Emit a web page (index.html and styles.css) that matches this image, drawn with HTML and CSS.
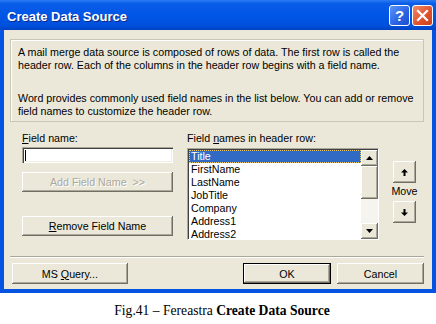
FILE: index.html
```html
<!DOCTYPE html>
<html lang="en">

<head>
    <meta charset="UTF-8">
    <title>Create Data Source</title>
    <link rel="stylesheet" href="styles.css">
</head>

<body>
    <div class="window">
        <div class="titlebar">
            <span class="title">Create Data Source</span>
            <div class="title-buttons">
                <span class="tb-btn help">?</span>
                <span class="tb-btn close">
                    <svg width="13" height="13" viewBox="0 0 13 13">
                        <path d="M2 2 L11 11 M11 2 L2 11" stroke="#fff" stroke-width="2.2" stroke-linecap="square" />
                    </svg>
                </span>
            </div>
        </div>

        <div class="content">
            <div class="info">
                <p>A mail merge data source is composed of rows of data. The first row is called the<br>header row. Each of the columns in the header row begins with a field name.</p>
                <p>Word provides commonly used field names in the list below. You can add or remove<br>field names to customize the header row.</p>
            </div>

            <div class="fields">
                <div class="left-col">
                    <label class="lbl"><u>F</u>ield name:</label>
                    <div class="textbox"><span class="caret"></span></div>
                    <button class="btn add" disabled><span>Add Field Name &nbsp;&gt;&gt;</span></button>
                    <button class="btn remove"><span><u>R</u>emove Field Name</span></button>
                </div>

                <div class="list-col">
                    <label class="lbl">Field <u>n</u>ames in header row:</label>
                    <div class="list-row">
                        <div class="listbox">
                            <ul class="items">
                                <li class="selected">Title</li>
                                <li>FirstName</li>
                                <li>LastName</li>
                                <li>JobTitle</li>
                                <li>Company</li>
                                <li>Address1</li>
                                <li>Address2</li>
                            </ul>
                            <div class="scrollbar">
                                <div class="sb-btn">
                                    <svg width="7" height="4" viewBox="0 0 7 4"><path d="M3.5 0 L7 4 H0 Z" fill="#000" /></svg>
                                </div>
                                <div class="sb-thumb"></div>
                                <div class="sb-track"></div>
                                <div class="sb-btn">
                                    <svg width="7" height="4" viewBox="0 0 7 4"><path d="M0 0 H7 L3.5 4 Z" fill="#000" /></svg>
                                </div>
                            </div>
                        </div>

                        <div class="move">
                            <button class="btn move-btn">
                                <svg width="7" height="7" viewBox="0 0 7 7"><path d="M3.5 0 L7 3.5 H4.5 V7 H2.5 V3.5 H0 Z" fill="#000" /></svg>
                            </button>
                            <span class="move-lbl">Move</span>
                            <button class="btn move-btn">
                                <svg width="7" height="7" viewBox="0 0 7 7"><path d="M2.5 0 H4.5 V3.5 H7 L3.5 7 L0 3.5 H2.5 Z" fill="#000" /></svg>
                            </button>
                        </div>
                    </div>
                </div>
            </div>

            <div class="separator"></div>

            <div class="footer">
                <button class="btn query"><span>MS <u>Q</u>uery...</span></button>
                <button class="btn ok"><span>OK</span></button>
                <button class="btn cancel"><span>Cancel</span></button>
            </div>
        </div>
    </div>

    <p class="caption">Fig.41 &ndash; Fereastra <b>Create Data Source</b></p>
</body>

</html>
```

FILE: styles.css
```css
body {
    margin: 0;
    background: #fff;
    font-family: "Liberation Sans", Arial, sans-serif;
    font-size: 10.7px;
}

.window {
    width: 436px;
    background: #0553e2;
    padding-bottom: 4px;
}

.titlebar {
    height: 30px;
    display: flex;
    align-items: center;
    justify-content: space-between;
    background: linear-gradient(#2d7cf4 0, #0a5de8 12%, #0056e6 50%, #0050de 85%, #0043c0 100%);
}

.title {
    margin-left: 7px;
    margin-top: 2px;
    color: #fff;
    font-weight: bold;
    font-size: 13px;
    text-shadow: 1px 1px #0a2a8a;
}

.title-buttons {
    display: flex;
    gap: 2px;
    margin-right: 3px;
    margin-top: 1px;
}

.tb-btn {
    width: 19px;
    height: 19px;
    border: 1px solid #fff;
    border-radius: 3px;
    display: flex;
    align-items: center;
    justify-content: center;
    color: #fff;
}

.help {
    background: linear-gradient(135deg, #5a94f8, #2a62e4 60%, #1c4fd0);
    font-weight: bold;
    font-size: 15px;
}

.close {
    background: linear-gradient(135deg, #f08a6a, #e0502c 60%, #c8401e);
}

.content {
    margin: 0 4px;
    height: 259px;
    background: #ebe8da;
    padding: 9px 8px 0 6px;
    box-sizing: border-box;
}

.info {
    height: 83px;
    box-sizing: border-box;
    border: 1px solid #c9c6b6;
    box-shadow: inset 1px 1px #fff;
    padding: 6px 0 0 7px;
    color: #000;
    white-space: nowrap;
}

.info p {
    margin: 0 0 20px;
    line-height: 13px;
}

.fields {
    display: flex;
    margin-top: 10px;
}

.lbl {
    display: block;
    line-height: 13px;
}

.left-col {
    width: 151px;
    margin-left: 12px;
}

.textbox {
    height: 16px;
    margin-top: 2px;
    background: #fff;
    box-sizing: border-box;
    box-shadow: inset 1px 1px #aca899, inset 2px 2px #404040, inset -1px -1px #fff, inset -2px -2px #f1efe2;
    padding: 3px 0 0 3px;
}

.caret {
    display: block;
    width: 1px;
    height: 11px;
    background: #000;
}

.btn {
    display: flex;
    align-items: center;
    justify-content: center;
    font-family: inherit;
    font-size: 10.7px;
    color: #000;
    background: #ebe8da;
    border: none;
    padding: 0;
    white-space: pre;
    box-shadow: inset -1px -1px #716f64, inset 1px 1px #fff, inset -2px -2px #aca899;
}

.add,
.remove {
    width: 151px;
    height: 20px;
}

.add {
    margin-top: 9px;
    color: #aca899;
    text-shadow: 1px 1px #fff;
}

.remove {
    margin-top: 24px;
}

.list-col {
    margin-left: 14px;
}

.list-row {
    display: flex;
    margin-top: 3px;
}

.listbox {
    width: 192px;
    height: 92px;
    box-sizing: border-box;
    background: #fff;
    border-top: 1px solid #aca899;
    border-left: 1px solid #aca899;
    border-right: 1px solid #fff;
    border-bottom: 1px solid #fff;
    box-shadow: inset 1px 1px #404040;
    padding: 1px 0 0 1px;
    display: flex;
    overflow: hidden;
}

.items {
    list-style: none;
    margin: 0;
    padding: 0;
    flex: 1;
}

.items li {
    height: 13px;
    line-height: 13px;
    padding-left: 2px;
}

.items li.selected {
    background: #316ac5;
    color: #fff;
    outline: 1px dotted #e8c86c;
    outline-offset: -1px;
}

.scrollbar {
    width: 17px;
    display: flex;
    flex-direction: column;
}

.sb-btn,
.sb-thumb {
    background: #ebe8da;
    box-shadow: inset -1px -1px #716f64, inset 1px 1px #fff, inset -2px -2px #aca899;
}

.sb-btn {
    height: 16px;
    display: flex;
    align-items: center;
    justify-content: center;
}

.sb-thumb {
    height: 33px;
}

.sb-track {
    flex: 1;
    background: #f5f4ee;
}

.move {
    display: flex;
    flex-direction: column;
    align-items: center;
    margin-left: 12px;
    margin-top: 13px;
    width: 27px;
}

.move-btn {
    width: 23px;
    height: 22px;
}

.move-lbl {
    line-height: 13px;
    margin: 2px 0 3px;
}

.separator {
    margin-top: 16px;
    border-top: 1px solid #aca899;
    border-bottom: 1px solid #fff;
}

.footer {
    display: flex;
    margin-top: 5px;
    padding-left: 2px;
}

.query,
.ok,
.cancel {
    height: 21px;
}

.query {
    width: 117px;
}

.ok {
    width: 89px;
    margin-left: 115px;
    box-shadow: inset 0 0 0 1px #000, inset -2px -2px #716f64, inset 2px 2px #fff, inset -3px -3px #aca899;
}

.cancel {
    width: 88px;
    margin-left: 6px;
}

.caption {
    margin: 10px 0 0;
    padding-left: 8px;
    text-align: center;
    font-family: "Liberation Serif", "Times New Roman", serif;
    font-size: 13.6px;
}
```
